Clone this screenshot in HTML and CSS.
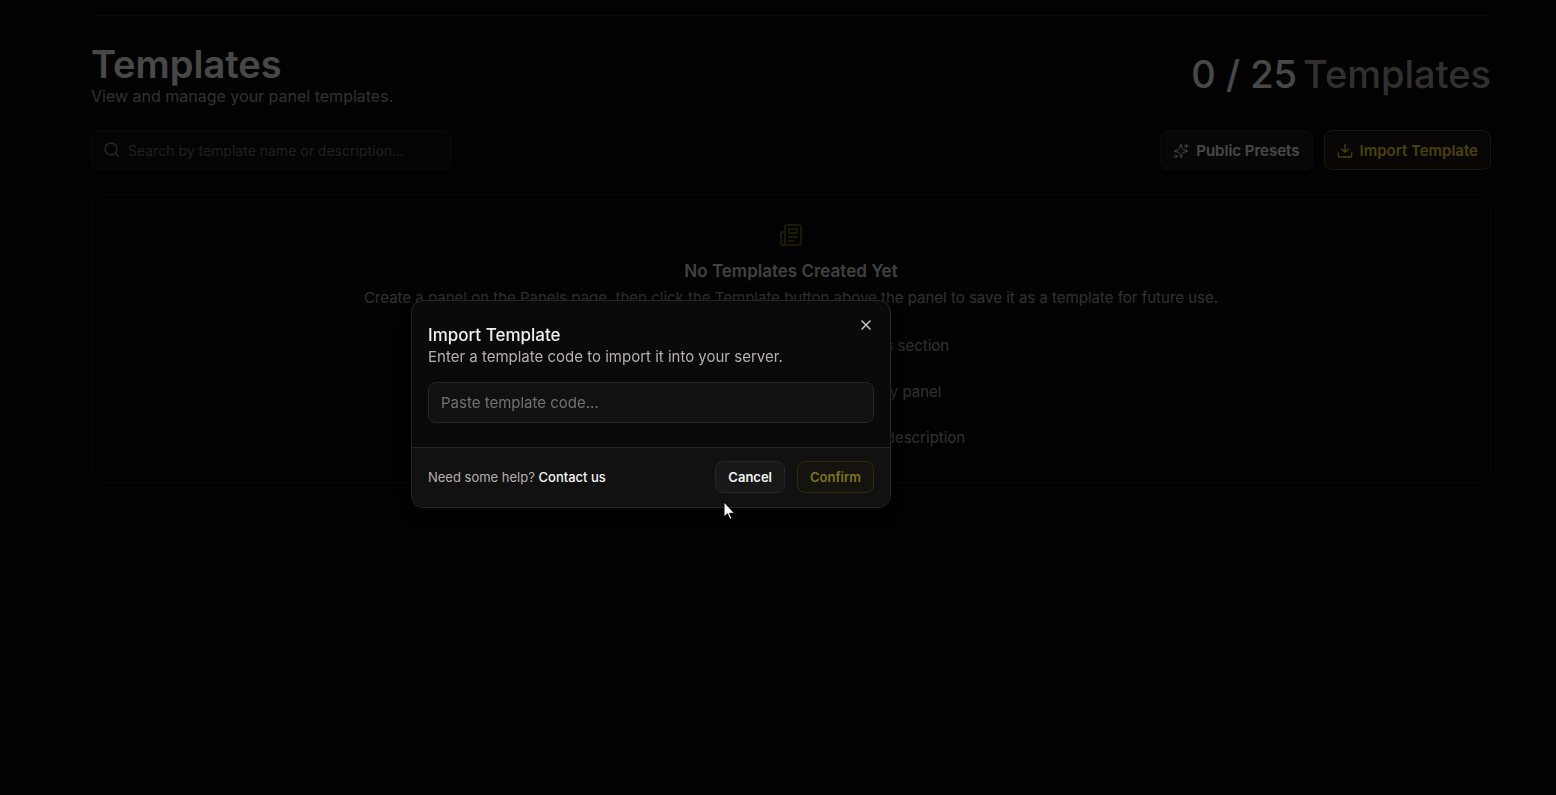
FILE: index.html
```html
<!DOCTYPE html>
<html lang="en">

<head>
	<meta charset="UTF-8">
	<meta name="viewport" content="width=device-width, initial-scale=1.0">
	<title>Templates</title>
	<link rel="stylesheet" href="styles.css">
</head>

<body>
	<main class="page">
		<header class="page-header">
			<div>
				<h1>Templates</h1>
				<p class="subtitle">View and manage your panel templates.</p>
			</div>
			<p class="counter"><strong>0 / 25</strong> <span>Templates</span></p>
		</header>

		<div class="toolbar">
			<label class="search">
				<svg class="icon" viewBox="0 0 24 24" aria-hidden="true">
					<circle cx="10.500" cy="10.500" r="9" />
					<path d="M21.500 21.500l-4.500-4.500" />
				</svg>
				<input type="search" aria-label="Search templates" placeholder="Search by template name or description...">
			</label>
			<div class="toolbar-actions">
				<button type="button" class="btn">
					<svg class="icon icon-thin" viewBox="0 0 24 24" aria-hidden="true">
						<path d="M9.937 15.5A2 2 0 0 0 8.5 14.063l-6.135-1.582a.5.5 0 0 1 0-.962L8.5 9.936A2 2 0 0 0 9.937 8.5l1.582-6.135a.5.5 0 0 1 .963 0L14.063 8.5A2 2 0 0 0 15.5 9.937l6.135 1.581a.5.5 0 0 1 0 .964L15.5 14.063a2 2 0 0 0-1.437 1.437l-1.582 6.135a.5.5 0 0 1-.963 0z" />
						<path d="M20 1.500v6M23 4.500h-6" />
						<circle cx="4" cy="20" r="2" />
					</svg>
					Public Presets
				</button>
				<button type="button" class="btn btn-primary">
					<svg class="icon" viewBox="0 0 24 24" aria-hidden="true">
						<path d="M22 15v4a2 2 0 0 1-2 2H4a2 2 0 0 1-2-2v-4" />
						<path d="M7 9l5 5 5-5M12 14V2" />
					</svg>
					Import Template
				</button>
			</div>
		</div>

		<section class="empty">
			<svg class="empty-icon" viewBox="0 0 24 24" aria-hidden="true">
				<path d="M6 4a2 2 0 0 1 2-2H20a2 2 0 0 1 2 2v16a2 2 0 0 1-2 2H4a2 2 0 0 1-2-2v-9a2 2 0 0 1 2-2h2" />
				<path d="M6 4v16a2 2 0 0 1-2 2" />
				<path d="M10 6h8v4h-8zM10 14h8M10 18h5" />
			</svg>
			<h2>No Templates Created Yet</h2>
			<p>Create a panel on the Panels page, then click the Template button above the panel to save it as a template for future use.</p>
			<ol class="steps">
				<li>Create a new panel under the Panels section</li>
				<li>Click the Template button above any panel</li>
				<li>Save your template with its name and description</li>
			</ol>
		</section>
	</main>

	<div class="overlay">
		<form class="modal" role="dialog" aria-labelledby="modalTitle">
			<div class="modal-body">
				<button type="button" class="modal-close" aria-label="Close">
					<svg viewBox="0 0 16 16" aria-hidden="true">
						<path d="M4 4l8 8M12 4l-8 8" />
					</svg>
				</button>
				<h3 id="modalTitle">Import Template</h3>
				<label for="templateCode">Enter a template code to import it into your server.</label>
				<input type="text" id="templateCode" placeholder="Paste template code...">
			</div>
			<div class="modal-footer">
				<p>Need some help? <a href="#">Contact us</a></p>
				<div class="modal-actions">
					<button type="button" class="btn btn-small">Cancel</button>
					<button type="submit" class="btn btn-small btn-primary" disabled>Confirm</button>
				</div>
			</div>
			<svg class="cursor" viewBox="0 0 12 19" aria-hidden="true">
				<path d="M1 1v15l3.500-3.200 2.500 5.500 2-1-2.500-5h5z" />
			</svg>
		</form>
	</div>
</body>

</html>
```
FILE: styles.css
```css
* {
	box-sizing: border-box;
}

body {
	margin: 0;
	min-height: 100vh;
	background-color: #070707;
	color: #f0f0f0;
	font-family: Inter, sans-serif;
	font-size: 15px;
	line-height: 24px;
}

h1,
h2,
h3,
p {
	margin: 0;
}

button,
input {
	font: inherit;
	color: inherit;
}

.page {
	margin: 15px 65px 0 91px;
	border-top: 1px solid #1c1c1c;
}

.page-header {
	display: flex;
	justify-content: space-between;
	align-items: center;
	padding-top: 28px;
}

h1 {
	font-size: 38px;
	font-weight: 600;
	line-height: 40px;
}

.subtitle {
	font-size: 16px;
	color: #a8a29e;
}

.counter {
	display: flex;
	gap: 6px;
	padding-bottom: 4px;
	font-size: 38px;
	font-weight: 500;
	line-height: 48px;
	color: #a8a29e;
}

.counter strong {
	font-weight: 500;
	color: #f0f0f0;
}

.toolbar {
	display: flex;
	justify-content: space-between;
	margin-top: 22px;
}

.toolbar-actions {
	display: flex;
	gap: 11px;
}

.search {
	display: flex;
	align-items: center;
	gap: 8px;
	width: 360px;
	height: 40px;
	padding: 0 12px;
	border: 1px solid #1f1f1f;
	border-radius: 8px;
	background-color: #0f0f0f;
	font-size: 14px;
	color: #8a8a8a;
}

.search input {
	flex: 1;
	min-width: 0;
	padding: 2px 0 0;
	border: none;
	outline: none;
	background: none;
}

.search input::placeholder {
	color: #6b6b6b;
}

.icon {
	width: 16px;
	height: 16px;
	fill: none;
	stroke: currentColor;
	stroke-width: 2;
	stroke-linecap: round;
	stroke-linejoin: round;
}

.icon-thin {
	stroke-width: 1.5;
}

.btn {
	display: flex;
	align-items: center;
	gap: 7px;
	height: 40px;
	padding: 1px 12px 0;
	border: 1px solid #262626;
	border-radius: 8px;
	background-color: #181818;
	font-weight: 600;
	cursor: pointer;
}

.btn-primary {
	border-color: #5c500c;
	background-color: #1b170f;
	color: #f0d81e;
}

.btn-small {
	height: 32px;
	padding: 0 12px;
	font-size: 13px;
}

.btn:disabled {
	border-color: #33290d;
	background-color: #15130e;
	color: #80741c;
	cursor: default;
}

.empty {
	display: flex;
	flex-direction: column;
	align-items: center;
	margin-top: 24px;
	padding: 28px 24px 32px;
	border: 1px solid #1c1c1c;
	border-radius: 12px;
	text-align: center;
	color: #a8a29e;
}

.empty-icon {
	width: 24px;
	height: 24px;
	margin-bottom: 12px;
	fill: none;
	stroke: #5e5a08;
	stroke-width: 2;
	stroke-linejoin: round;
	stroke-linecap: round;
}

.empty h2 {
	margin-bottom: 3px;
	font-size: 17px;
	font-weight: 600;
	line-height: 24px;
	color: #d8d8d8;
}

.steps {
	display: flex;
	flex-direction: column;
	gap: 22px;
	margin: 24px 0 0;
	padding: 0;
	list-style: none;
}

.overlay {
	position: fixed;
	inset: 0;
	display: flex;
	justify-content: center;
	align-items: center;
	padding: 13px 254px 0 0;
	background-color: rgba(0, 0, 0, 0.7);
}

.modal {
	position: relative;
	width: 480px;
	border: 1px solid #262626;
	border-radius: 12px;
	background-color: #0a0a0a;
	box-shadow: 0 8px 24px rgba(0, 0, 0, 0.6);
}

.modal-body {
	position: relative;
	display: flex;
	flex-direction: column;
	padding: 24px 16px;
}

.modal-body h3 {
	font-size: 17px;
	font-weight: 500;
	line-height: 20px;
}

.modal-body label {
	color: #b5b0ab;
}

.modal-body input {
	height: 41px;
	margin-top: 13px;
	padding: 0 12px;
	border: 1px solid #262626;
	border-radius: 8px;
	background-color: #111;
}

.modal-body input::placeholder {
	color: #737373;
}

.modal-close {
	position: absolute;
	top: 16px;
	right: 16px;
	width: 16px;
	height: 16px;
	padding: 0;
	border: none;
	background: none;
	color: #c8c8c8;
	cursor: pointer;
}

.modal-close svg {
	display: block;
	fill: none;
	stroke: currentColor;
	stroke-width: 1.5;
	stroke-linecap: round;
}

.modal-footer {
	display: flex;
	justify-content: space-between;
	align-items: center;
	padding: 13px 16px 14px;
	border-top: 1px solid #262626;
	border-radius: 0 0 11px 11px;
	background-color: #111;
	font-size: 13px;
	color: #b5b0ab;
}

.modal-footer a {
	font-weight: 500;
	color: #f5f5f5;
	text-decoration: none;
}

.modal-actions {
	display: flex;
	gap: 12px;
}

.modal-actions .btn:enabled {
	color: #f5f5f5;
}

.cursor {
	position: absolute;
	left: 311px;
	top: 200px;
	width: 12px;
	height: 19px;
	fill: #fff;
	stroke: #000;
}
```
